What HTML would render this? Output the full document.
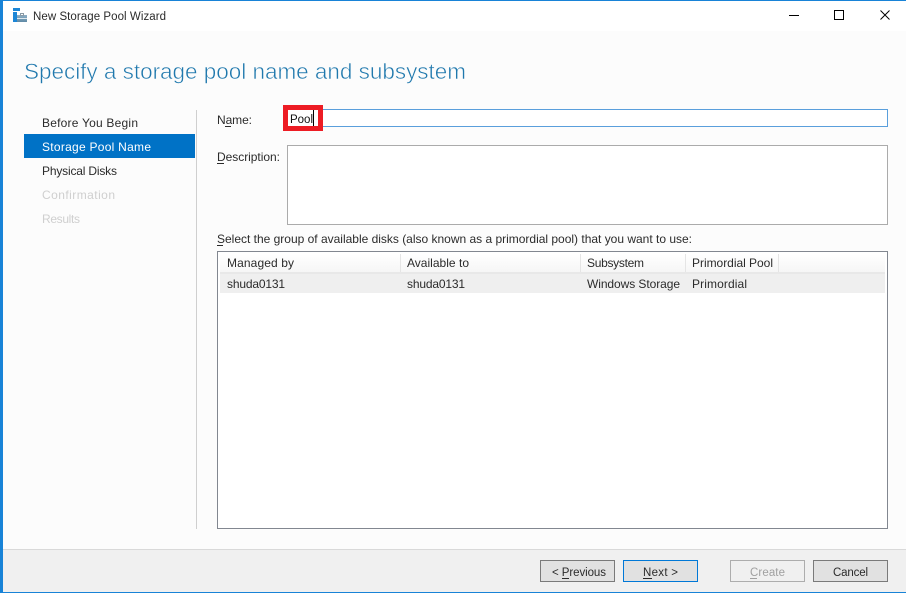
<!DOCTYPE html>
<html><head><meta charset="utf-8"><title>New Storage Pool Wizard</title>
<style>
html,body{margin:0;padding:0;background:#fff;width:906px;height:593px;overflow:hidden}
svg{display:block}
text{font-family:"Liberation Sans",sans-serif;font-size:12px;fill:#2b2b2b}
.s{font-size:11.5px}
</style></head><body>
<svg width="906" height="593" viewBox="0 0 906 593" xmlns="http://www.w3.org/2000/svg" shape-rendering="crispEdges">
<defs><linearGradient id="h" x1="0" y1="0" x2="0" y2="1"><stop offset="0" stop-color="#ffffff"/><stop offset="1" stop-color="#f6f6f6"/></linearGradient>
<linearGradient id="b" x1="0" y1="0" x2="0" y2="1"><stop offset="0" stop-color="#8fb0c6"/><stop offset="1" stop-color="#5f8aa6"/></linearGradient></defs>
<rect width="906" height="593" fill="#fff"/>
<rect x="3" y="31" width="903" height="518" fill="#fcfcfc"/>
<rect x="3" y="549" width="903" height="1" fill="#d9d9d9"/>
<rect x="3" y="550" width="903" height="42" fill="#f0f0f0"/>
<rect x="0" y="0" width="906" height="1" fill="#1883d7"/>
<rect x="0" y="0" width="3" height="593" fill="#1883d7"/>
<rect x="0" y="592" width="906" height="1" fill="#1883d7"/>

<!-- title icon -->
<rect x="13" y="8" width="7" height="3" fill="#1c86d6"/>
<rect x="13" y="12" width="4" height="10" fill="#1c86d6"/>
<rect x="17" y="15" width="10" height="7" fill="url(#b)"/>
<rect x="17" y="18" width="10" height="1" fill="#dfe8ee"/>
<rect x="20.5" y="13.5" width="3" height="2" fill="none" stroke="#8a9aa6" stroke-width="1"/>
<text x="33" y="20" textLength="133" lengthAdjust="spacing" class="s">New Storage Pool Wizard</text>

<!-- window controls -->
<rect x="789" y="15" width="10" height="1" fill="#000"/>
<rect x="834.5" y="10.5" width="9" height="9" fill="none" stroke="#000" stroke-width="1"/>
<path d="M880.5 10.5L889.5 19.5M889.5 10.5L880.5 19.5" stroke="#000" stroke-width="1" fill="none" shape-rendering="auto"/>

<text x="24" y="79" textLength="442" lengthAdjust="spacing" style="font-size:22.5px;fill:#1f78ad;stroke:#fcfcfc;stroke-width:.55px">Specify a storage pool name and subsystem</text>

<!-- sidebar -->
<rect x="196" y="110" width="1" height="419" fill="#cfcfcf"/>
<rect x="24" y="134" width="171" height="24" fill="#0072c6"/>
<text x="42" y="127" textLength="96" lengthAdjust="spacing">Before You Begin</text>
<text x="42" y="151" textLength="109" lengthAdjust="spacing" style="fill:#fff">Storage Pool Name</text>
<text x="42" y="175" textLength="75" lengthAdjust="spacing">Physical Disks</text>
<text x="42" y="199" textLength="73" lengthAdjust="spacing" style="fill:#cfcfcf">Confirmation</text>
<text x="42" y="223" textLength="38" lengthAdjust="spacing" style="fill:#cfcfcf">Results</text>

<!-- name -->
<text x="217" y="124" textLength="35" lengthAdjust="spacing">Name:</text>
<rect x="225" y="126" width="6" height="1" fill="#2b2b2b"/>
<rect x="287.5" y="109.5" width="600" height="17" fill="#fff" stroke="#5a9fdc" stroke-width="1"/>
<rect x="283" y="105" width="40" height="26" fill="#ed1c24"/>
<rect x="288" y="110" width="30" height="16" fill="#fff"/>
<text x="290" y="123" textLength="23" lengthAdjust="spacing" class="s" style="fill:#111">Pool</text>
<rect x="313" y="110" width="1" height="16" fill="#000"/>

<!-- description -->
<text x="217" y="161" textLength="63" lengthAdjust="spacing">Description:</text>
<rect x="217" y="163" width="7" height="1" fill="#2b2b2b"/>
<rect x="287.5" y="145.5" width="600" height="79" fill="#fff" stroke="#ababab" stroke-width="1"/>

<!-- list -->
<text x="217" y="243" textLength="475" lengthAdjust="spacing">Select the group of available disks (also known as a primordial pool) that you want to use:</text>
<rect x="217" y="245" width="6" height="1" fill="#2b2b2b"/>
<rect x="217.5" y="251.5" width="670" height="277" fill="#fff" stroke="#828790" stroke-width="1"/>
<rect x="220" y="254" width="665" height="18" fill="url(#h)"/>
<rect x="220" y="272" width="665" height="2" fill="#e8e8e8"/>
<rect x="400" y="254" width="1" height="18" fill="#e5e5e5"/>
<rect x="580" y="254" width="1" height="18" fill="#e5e5e5"/>
<rect x="685" y="254" width="1" height="18" fill="#e5e5e5"/>
<rect x="778" y="254" width="1" height="18" fill="#e5e5e5"/>
<rect x="220" y="274" width="665" height="19" fill="#efefef"/>
<text x="227" y="267" textLength="67" lengthAdjust="spacing">Managed by</text>
<text x="407" y="267" textLength="62" lengthAdjust="spacing">Available to</text>
<text x="587" y="267" textLength="57" lengthAdjust="spacing">Subsystem</text>
<text x="692" y="267" textLength="81" lengthAdjust="spacing">Primordial Pool</text>
<text x="227" y="288" textLength="58" lengthAdjust="spacing">shuda0131</text>
<text x="407" y="288" textLength="58" lengthAdjust="spacing">shuda0131</text>
<text x="587" y="288" textLength="93" lengthAdjust="spacing">Windows Storage</text>
<text x="692" y="288" textLength="55" lengthAdjust="spacing">Primordial</text>

<!-- buttons -->
<rect x="540.5" y="560.5" width="74" height="21" fill="#e1e1e1" stroke="#7a7a7a" stroke-width="1"/>
<text x="552" y="576" textLength="54" lengthAdjust="spacing" class="s">&lt; Previous</text>
<rect x="562" y="578" width="7" height="1" fill="#2b2b2b"/>
<rect x="623.5" y="560.5" width="74" height="21" fill="#e1e1e1" stroke="#0078d7" stroke-width="1"/>
<text x="643" y="576" textLength="35" lengthAdjust="spacing" class="s">Next &gt;</text>
<rect x="643" y="578" width="9" height="1" fill="#2b2b2b"/>
<rect x="730.5" y="560.5" width="74" height="21" fill="#f0f0f0" stroke="#adadad" stroke-width="1"/>
<text x="750" y="576" textLength="35" lengthAdjust="spacing" class="s" style="fill:#a0a0a0">Create</text>
<rect x="750" y="578" width="7" height="1" fill="#a0a0a0"/>
<rect x="813.5" y="560.5" width="74" height="21" fill="#e1e1e1" stroke="#7a7a7a" stroke-width="1"/>
<text x="833" y="576" textLength="35" lengthAdjust="spacing" class="s">Cancel</text>
</svg>
</body></html>
